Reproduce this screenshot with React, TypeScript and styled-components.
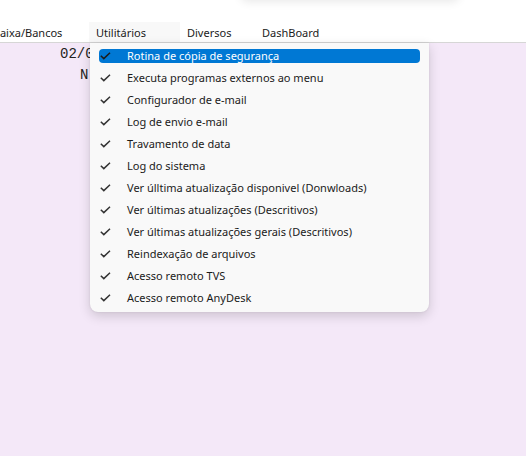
import { styled, createGlobalStyle } from "styled-components";

const GlobalStyle = createGlobalStyle`
    body {
        margin: 0;
        background: #ffffff;
        font-family: "Noto Sans", "Open Sans", sans-serif;
    }
`;

const Screen = styled.div`
    width: 526px;
    height: 456px;
    display: flex;
    flex-direction: column;
    overflow: hidden;
    position: relative;
`;

const TopStrip = styled.div`
    height: 22px;
    background: #ffffff;
    position: relative;
`;

const WindowShadow = styled.div`
    position: absolute;
    left: 240px;
    top: -30px;
    width: 220px;
    height: 30px;
    border-radius: 8px;
    box-shadow: 0 2px 10px rgba(0, 0, 0, 0.09);
`;

const MenuBar = styled.div`
    height: 20px;
    display: flex;
    align-items: stretch;
    background: #ffffff;
    border-bottom: 1px solid #d6d6d6;
`;

const BarItem = styled.div<{ $w: number; $open?: boolean; $shift?: number }>`
    width: ${(p) => p.$w}px;
    margin-left: ${(p) => p.$shift ?? 0}px;
    padding-left: 7px;
    box-sizing: border-box;
    display: flex;
    align-items: center;
    font-size: 11px;
    color: #1b1b1b;
    background: ${(p) => (p.$open ? "#f8f8f8" : "transparent")};
    white-space: nowrap;
`;

const Workspace = styled.div`
    flex: 1;
    background: #f4e8f8;
    position: relative;
    font-family: "Liberation Mono", monospace;
    font-size: 14px;
    color: #222222;
`;

const FieldLine = styled.div<{ $indent: number }>`
    padding-left: ${(p) => p.$indent}px;
    height: 21px;
    line-height: 21px;
    white-space: nowrap;
`;

const FieldBlock = styled.div`
    padding-top: 1px;
`;

const Dropdown = styled.div`
    position: absolute;
    left: 90px;
    top: 0;
    width: 339px;
    padding: 2px 0 3px;
    background: #f9f9f9;
    border-radius: 0 0 8px 8px;
    box-shadow: 0 4px 12px rgba(0, 0, 0, 0.16), 0 0 2px rgba(0, 0, 0, 0.1);
    font-family: "Noto Sans", "Open Sans", sans-serif;
`;

const Row = styled.div`
    height: 22px;
    padding: 4px 9px;
    box-sizing: border-box;
`;

const Item = styled.div<{ $active?: boolean }>`
    height: 14px;
    display: flex;
    align-items: center;
    border-radius: 4px;
    background: ${(p) => (p.$active ? "#0078d4" : "transparent")};
    color: ${(p) => (p.$active ? "#ffffff" : "#1b1b1b")};
    font-size: 11px;
    white-space: nowrap;
`;

const Label = styled.span`
    position: relative;
    top: -1px;
`;

const Check = styled.span<{ $active?: boolean }>`
    width: 28px;
    padding-left: 1px;
    box-sizing: border-box;
    display: flex;
    align-items: center;
    color: ${(p) => (p.$active ? "#1b1b1b" : "#333333")};
`;

const items = [
    "Rotina de cópia de segurança",
    "Executa programas externos ao menu",
    "Configurador de e-mail",
    "Log de envio e-mail",
    "Travamento de data",
    "Log do sistema",
    "Ver úlltima atualização disponivel (Donwloads)",
    "Ver últimas atualizações (Descritivos)",
    "Ver últimas atualizações gerais (Descritivos)",
    "Reindexação de arquivos",
    "Acesso remoto TVS",
    "Acesso remoto AnyDesk",
];

function CheckIcon() {
    return (
        <svg width="11" height="8" viewBox="0 0 11 8" fill="none">
            <path d="M0.8 3.8 L3.8 6.6 L10 0.8" stroke="currentColor" strokeWidth="1.5" />
        </svg>
    );
}

export default function App() {
    return (
        <Screen>
            <GlobalStyle />
            <TopStrip>
                <WindowShadow />
            </TopStrip>
            <MenuBar>
                <BarItem $w={103} $shift={-14}>Caixa/Bancos</BarItem>
                <BarItem $w={91} $open>Utilitários</BarItem>
                <BarItem $w={75}>Diversos</BarItem>
                <BarItem $w={80}>DashBoard</BarItem>
            </MenuBar>
            <Workspace>
                <FieldBlock>
                    <FieldLine $indent={60}>02/0</FieldLine>
                    <FieldLine $indent={80}>N</FieldLine>
                </FieldBlock>
                <Dropdown>
                    {items.map((label, i) => (
                        <Row key={label}>
                            <Item $active={i === 0}>
                                <Check $active={i === 0}>
                                    <CheckIcon />
                                </Check>
                                <Label>{label}</Label>
                            </Item>
                        </Row>
                    ))}
                </Dropdown>
            </Workspace>
        </Screen>
    );
}
